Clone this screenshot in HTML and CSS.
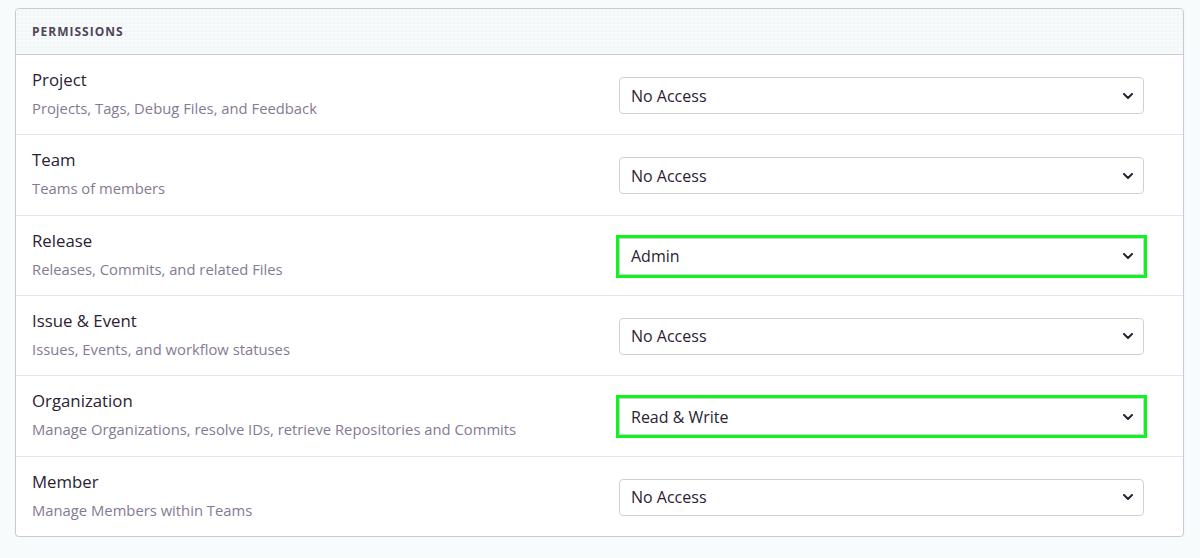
FILE: index.html
```html
<!DOCTYPE html>
<html lang="en">
<head>
<meta charset="utf-8">
<title>Permissions</title>
<link rel="stylesheet" href="styles.css">
</head>
<body>
<section class="panel">
  <header class="panel-header">Permissions</header>

  <div class="perm-row">
    <div class="perm-info">
      <div class="perm-name">Project</div>
      <div class="perm-desc">Projects, Tags, Debug Files, and Feedback</div>
    </div>
    <div class="select"><span>No Access</span><svg class="chevron" viewBox="0 0 10 6"><path d="M1 1 5 5 9 1"/></svg></div>
  </div>

  <div class="perm-row">
    <div class="perm-info">
      <div class="perm-name">Team</div>
      <div class="perm-desc">Teams of members</div>
    </div>
    <div class="select"><span>No Access</span><svg class="chevron" viewBox="0 0 10 6"><path d="M1 1 5 5 9 1"/></svg></div>
  </div>

  <div class="perm-row">
    <div class="perm-info">
      <div class="perm-name">Release</div>
      <div class="perm-desc">Releases, Commits, and related Files</div>
    </div>
    <div class="select is-marked"><span>Admin</span><svg class="chevron" viewBox="0 0 10 6"><path d="M1 1 5 5 9 1"/></svg></div>
  </div>

  <div class="perm-row">
    <div class="perm-info">
      <div class="perm-name">Issue &amp; Event</div>
      <div class="perm-desc">Issues, Events, and workflow statuses</div>
    </div>
    <div class="select"><span>No Access</span><svg class="chevron" viewBox="0 0 10 6"><path d="M1 1 5 5 9 1"/></svg></div>
  </div>

  <div class="perm-row">
    <div class="perm-info">
      <div class="perm-name">Organization</div>
      <div class="perm-desc">Manage Organizations, resolve IDs, retrieve Repositories and Commits</div>
    </div>
    <div class="select is-marked"><span>Read &amp; Write</span><svg class="chevron" viewBox="0 0 10 6"><path d="M1 1 5 5 9 1"/></svg></div>
  </div>

  <div class="perm-row">
    <div class="perm-info">
      <div class="perm-name">Member</div>
      <div class="perm-desc">Manage Members within Teams</div>
    </div>
    <div class="select"><span>No Access</span><svg class="chevron" viewBox="0 0 10 6"><path d="M1 1 5 5 9 1"/></svg></div>
  </div>
</section>
</body>
</html>
```

FILE: styles.css
```css
html, body {
  margin: 0;
  padding: 0;
}

body {
  background: #f8fbfc;
  font-family: "Open Sans", "Liberation Sans", sans-serif;
  color: #2b2233;
  padding: 8px 16px 0 15px;
}

.panel {
  background: #fff;
  border: 1px solid #cfc7d8;
  border-radius: 4px;
  box-shadow: 0 1px 2px rgba(43, 34, 51, 0.06);
  overflow: hidden;
}

/* header strip with a faint dotted texture */
.panel-header {
  background-color: #f7fafb;
  background-image: radial-gradient(rgba(120, 140, 150, 0.10) 0.6px, transparent 0.8px);
  background-size: 4px 4px;
  border-bottom: 1px solid #cfc7d8;
  height: 46px;
  box-sizing: border-box;
  padding: 0 16px 1px;
  display: flex;
  align-items: center;
  font-size: 12px;
  font-weight: 700;
  text-transform: uppercase;
  color: #4f4459;
  letter-spacing: 1px;
}

.perm-row {
  display: grid;
  grid-template-columns: 1fr 525px;
  align-items: center;
  padding: 15px 39px 16.33px 16px;
  border-bottom: 1px solid #e7e2ec;
}

.perm-row:last-child {
  border-bottom: none;
}

.perm-name {
  font-size: 16.8px;
  line-height: 20px;
  color: #2b2233;
}

.perm-desc {
  font-size: 14.8px;
  line-height: 20px;
  margin-top: 8px;
  color: #857a93;
}

.select {
  height: 37px;
  margin-top: 3px;
  box-sizing: border-box;
  border: 1px solid #d4cdda;
  border-radius: 4px;
  display: flex;
  align-items: center;
  justify-content: space-between;
  padding: 0 10px 0 11px;
  font-size: 16px;
  color: #2b2233;
  background: #fff;
}

.select.is-marked {
  outline: 3px solid #0cf51c;
  border-radius: 0;
}

.chevron {
  width: 10px;
  height: 6px;
  fill: none;
  stroke: #2b2233;
  stroke-width: 2;
  stroke-linecap: round;
  stroke-linejoin: round;
}
```
